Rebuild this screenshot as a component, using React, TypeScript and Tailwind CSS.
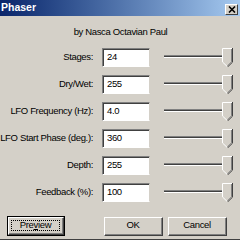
import React from 'react'

const rows = [
  { label: 'Stages:', value: '24' },
  { label: 'Dry/Wet:', value: '255' },
  { label: 'LFO Frequency (Hz):', value: '4.0' },
  { label: 'LFO Start Phase (deg.):', value: '360' },
  { label: 'Depth:', value: '255' },
  { label: 'Feedback (%):', value: '100' },
]

function Slider() {
  return (
    <div className="relative w-[72px] h-[19px]">
      <div className="absolute left-0 right-[6px] top-[7px] flex flex-col">
        <div className="h-px bg-[#808080]" />
        <div className="h-px bg-[#404040]" />
        <div className="h-px bg-white" />
      </div>
      <svg className="absolute left-[58px] top-0" width="11" height="19" viewBox="0 0 11 19">
        <path d="M0.5 0.5 H10 V14 L5.5 18.5 L0.5 14 Z" fill="#d4d0c8" />
        <path d="M0.5 14 V0.5 H10" stroke="#ffffff" fill="none" />
        <path d="M10.5 0 V14.2 L5.5 19" stroke="#404040" fill="none" />
        <path d="M9.5 1 V13.8 L5.5 17.8" stroke="#808080" fill="none" />
        <path d="M0.5 14 L5 18.3" stroke="#ffffff" fill="none" />
      </svg>
    </div>
  )
}

function Button({ children, focused }: { children: React.ReactNode; focused?: boolean }) {
  if (focused) {
    return (
      <div className="w-[58px] h-[20px] border border-black">
        <div className="h-full border-t border-l border-t-white border-l-white border-b border-r border-b-[#404040] border-r-[#404040]">
          <div className="h-full border-b border-r border-b-[#808080] border-r-[#808080] p-[2px]">
            <div className="h-full border border-dotted border-black flex items-center justify-center text-black">
              {children}
            </div>
          </div>
        </div>
      </div>
    )
  }
  return (
    <div className="w-[59px] h-[19px] border-t border-l border-t-white border-l-white border-b border-r border-b-[#404040] border-r-[#404040]">
      <div className="h-full border-b border-r border-b-[#808080] border-r-[#808080] flex items-center justify-center text-black">
        {children}
      </div>
    </div>
  )
}

export default function App() {
  return (
    <div
      className="w-[240px] h-[240px] bg-[#d4d0c8] flex flex-col overflow-hidden text-[9.5px] tracking-[-0.35px] text-black"
      style={{ fontFamily: '"Liberation Sans", Arial, sans-serif' }}
    >
      <div className="h-[16px] shrink-0 bg-gradient-to-r from-[#0a246a] to-[#a6caf0] flex items-center justify-between pl-[1px] pr-[2px]">
        <span className="text-white font-bold text-[10.5px] tracking-normal">Phaser</span>
        <div className="w-[13px] h-[11px] mt-[2px] bg-[#d4d0c8] border-t border-l border-t-white border-l-white border-b border-r border-b-[#404040] border-r-[#404040] flex items-center justify-center">
          <svg width="8" height="7" viewBox="0 0 8 7">
            <path d="M1 0.5 L7 6.5 M7 0.5 L1 6.5" stroke="#000" strokeWidth="1.6" />
          </svg>
        </div>
      </div>

      <div className="h-[32px] shrink-0 flex items-center justify-center pl-[1px]">
        by Nasca Octavian Paul
      </div>

      <div className="flex flex-col gap-[8px]">
        {rows.map((r) => (
          <div key={r.label} className="flex items-center h-[19px]">
            <div className="w-[94px] text-right pr-[1px]">{r.label}</div>
            <div className="ml-[8px] w-[48px] h-[19px] bg-white border-t border-l border-t-[#808080] border-l-[#808080] border-b border-r border-b-white border-r-[#d4d0c8] shadow-[inset_1px_1px_0_#404040] flex items-center pl-[4px]">
              {r.value}
            </div>
            <div className="ml-[14px]">
              <Slider />
            </div>
          </div>
        ))}
      </div>

      <div className="flex items-center mt-[14px] px-[7px]">
        <Button focused>
          <span>
            Pre<span className="underline">v</span>iew
          </span>
        </Button>
        <div className="ml-auto flex gap-[5px] mr-[6px]">
          <Button>OK</Button>
          <Button>Cancel</Button>
        </div>
      </div>

      <div className="mt-auto h-[4px] border-b border-[#404040] border-t-0" />
    </div>
  )
}
